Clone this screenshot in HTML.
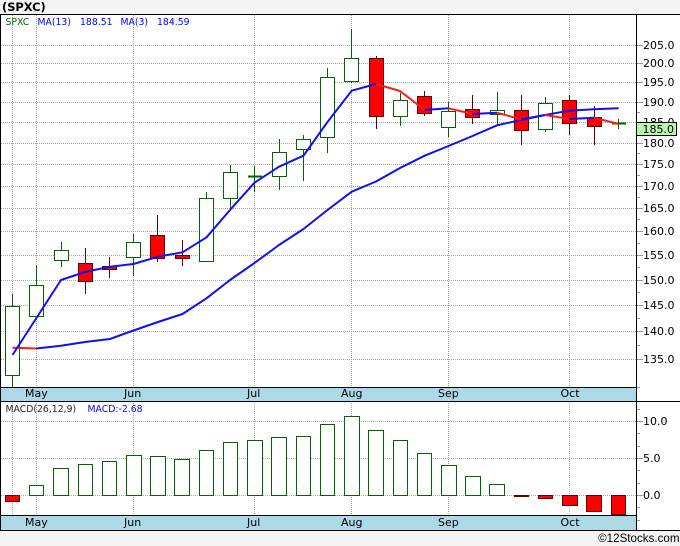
<!DOCTYPE html>
<html><head><meta charset="utf-8"><style>
html,body{margin:0;padding:0;background:#f4f4f4;width:680px;height:546px;overflow:hidden}
svg{display:block}
text{font-family:"DejaVu Sans",sans-serif;font-size:11px;fill:#000}
.s{font-size:9.3px}
</style></head><body>
<svg width="680" height="546" viewBox="0 0 680 546" xmlns="http://www.w3.org/2000/svg">
<rect width="680" height="546" fill="#f4f4f4"/>
<rect x="0" y="14" width="680" height="516" fill="#fff"/>
<text x="2" y="11" style="font-weight:bold;font-size:11.4px">(SPXC)</text>
<g fill="none" stroke="#aaa" stroke-dasharray="1 1" shape-rendering="crispEdges">
<path d="M1 45.5H637M1 63.5H637M1 82.5H637M1 102.5H637M1 122.5H637M1 143.5H637M1 164.5H637M1 186.5H637M1 208.5H637M1 231.5H637M1 255.5H637M1 280.5H637M1 305.5H637M1 331.5H637M1 359.5H637"/>
<path d="M1 421.5H637M1 458.5H637M1 495.5H637"/>
<path d="M12.5 15V387M36.5 15V387M133.5 15V387M254.5 15V387M351.5 15V387M448.5 15V387M569.5 15V387"/>
<path d="M12.5 401V515M36.5 401V515M133.5 401V515M254.5 401V515M351.5 401V515M448.5 401V515M569.5 401V515"/>
</g>
<rect x="0" y="387" width="637" height="14" fill="#add8e6"/>
<rect x="0" y="515" width="637" height="15" fill="#add8e6"/>
<g fill="none" stroke="#999" shape-rendering="crispEdges">
<path d="M637 45.5H643M637 63.5H643M637 82.5H643M637 102.5H643M637 122.5H643M637 143.5H643M637 164.5H643M637 186.5H643M637 208.5H643M637 231.5H643M637 255.5H643M637 280.5H643M637 305.5H643M637 331.5H643M637 359.5H643"/>
<path d="M637 112.5H640M637 153.5H640M637 175.5H640M637 197.5H640M637 219.5H640M637 243.5H640M637 267.5H640M637 292.5H640M637 318.5H640M637 345.5H640M637 387.5H640"/>
<path d="M637 421.5H643M637 458.5H643M637 495.5H643"/>
<path d="M637 409.5H640M637 433.5H640M637 446.5H640M637 470.5H640M637 483.5H640M637 507.5H640M637 520.5H640"/>
</g>
<g fill="none" stroke="#000" shape-rendering="crispEdges">
<path d="M0 14.5H680M0 401.5H680"/>
<path d="M0 387.5H637M0 515.5H637M0 530.5H680"/>
<path d="M636.5 14V530"/>
<path d="M.5 14V530"/>
</g>

<g fill="none" stroke="#006400" shape-rendering="crispEdges">
<path d="M12.5 294V306M12.5 375V387M36.5 265V285M61.5 242V250M61.5 260V267M133.5 234V242M133.5 257V276M206.5 192V198M230.5 165V172M230.5 198V208M254.5 166V192M279.5 139V152M279.5 176V190M303.5 135V139M303.5 149V181M327.5 68V77M327.5 137V153M351.5 29V58M351.5 81V83M400.5 93V100M400.5 116V126M448.5 102V111M448.5 127V137M497.5 92V110M497.5 114V125M545.5 97V103M545.5 129V132M618.5 119V129"/>
</g>
<g fill="none" stroke="#660000" shape-rendering="crispEdges">
<path d="M85.5 248V263M85.5 282V294M109.5 257V266M109.5 269V278M157.5 215V235M157.5 259V262M182.5 240V255M182.5 258V266M376.5 56V58M376.5 116V129M424.5 91V96M424.5 113V116M472.5 95V109M472.5 117V124M521.5 95V110M521.5 130V145M569.5 95V100M569.5 123V135M594.5 106V117M594.5 126V145"/>
</g>
<g fill="#fff" stroke="#006400" shape-rendering="crispEdges">
<rect x="5.5" y="306.5" width="14" height="69"/>
<rect x="29.5" y="285.5" width="14" height="31"/>
<rect x="54.5" y="250.5" width="14" height="10"/>
<rect x="126.5" y="242.5" width="14" height="15"/>
<rect x="199.5" y="198.5" width="14" height="63"/>
<rect x="223.5" y="172.5" width="14" height="26"/>
<rect x="272.5" y="152.5" width="14" height="24"/>
<rect x="296.5" y="139.5" width="14" height="10"/>
<rect x="320.5" y="77.5" width="14" height="60"/>
<rect x="344.5" y="58.5" width="14" height="23"/>
<rect x="393.5" y="100.5" width="14" height="16"/>
<rect x="441.5" y="111.5" width="14" height="16"/>
<rect x="490.5" y="110.5" width="14" height="4"/>
<rect x="538.5" y="103.5" width="14" height="26"/>
</g>
<path d="M248 176.5H262M612 123.5H626" stroke="#006400" stroke-width="2" fill="none" shape-rendering="crispEdges"/>
<g fill="#f00" stroke="#660000" shape-rendering="crispEdges">
<rect x="78.5" y="263.5" width="14" height="18"/>
<rect x="102.5" y="266.5" width="14" height="3"/>
<rect x="150.5" y="235.5" width="14" height="23"/>
<rect x="175.5" y="255.5" width="14" height="3"/>
<rect x="369.5" y="58.5" width="14" height="58"/>
<rect x="417.5" y="96.5" width="14" height="17"/>
<rect x="465.5" y="109.5" width="14" height="8"/>
<rect x="514.5" y="110.5" width="14" height="20"/>
<rect x="562.5" y="100.5" width="14" height="23"/>
<rect x="587.5" y="117.5" width="14" height="9"/>
</g>

<g fill="none" stroke-width="2" stroke-linejoin="round">
<path stroke="#ff1a1a" d="M12.5 347.7L36.5 348.5"/>
<path stroke="#1010f0" d="M36.5 348.5L61 345.7L85 342L110 339L133.5 330.5L158 322L182.5 314L206.5 298.3L230 280L254.5 263L279 245L303.5 229L327.5 210L351.7 191.7L376 181.5L400 168L424.7 155.7L448.5 146L472.5 136L497 125.3L521 120L545 115L569 110.7L594 109.3L618.7 108.3"/>
<path stroke="#ff1a1a" d="M376 84L400 91L424.7 110M448.5 108.3L472.5 114M497 112.7L521 119.3M545 115L569.5 119M594 117.7L618.7 124"/>
<path stroke="#1010f0" d="M12.5 355L61 280L85 272L110 266.7L133.5 264L158 256.7L182.5 252.3L206.5 237.3L230 210L254.5 182.7L279 166.7L303.5 155.7L327.5 122L351.7 90.7L376 84M424.7 110L448.5 108.3M472.5 114L497 112.7M521 119.3L545 115M569.5 119L594 117.7"/>
</g>

<g fill="#fff" stroke="#006400" shape-rendering="crispEdges">
<rect x="29.5" y="485.5" width="14" height="10"/>
<rect x="53.5" y="468.5" width="15" height="27"/>
<rect x="78.5" y="464.5" width="14" height="31"/>
<rect x="102.5" y="461.5" width="14" height="34"/>
<rect x="126.5" y="455.5" width="15" height="40"/>
<rect x="150.5" y="456.5" width="15" height="39"/>
<rect x="174.5" y="459.5" width="15" height="36"/>
<rect x="199.5" y="450.5" width="14" height="45"/>
<rect x="223.5" y="442.5" width="14" height="53"/>
<rect x="247.5" y="440.5" width="15" height="55"/>
<rect x="271.5" y="437.5" width="15" height="58"/>
<rect x="296.5" y="436.5" width="14" height="59"/>
<rect x="320.5" y="424.5" width="14" height="71"/>
<rect x="344.5" y="416.5" width="15" height="79"/>
<rect x="368.5" y="430.5" width="15" height="65"/>
<rect x="393.5" y="440.5" width="14" height="55"/>
<rect x="417.5" y="453.5" width="14" height="42"/>
<rect x="441.5" y="465.5" width="15" height="30"/>
<rect x="465.5" y="476.5" width="15" height="19"/>
<rect x="489.5" y="484.5" width="15" height="11"/>
</g>
<g fill="#f00" stroke="#660000" shape-rendering="crispEdges">
<rect x="5.5" y="495.5" width="14" height="6"/>
<rect x="514.5" y="495.5" width="14" height="1"/>
<rect x="538.5" y="495.5" width="14" height="3"/>
<rect x="562.5" y="495.5" width="15" height="10"/>
<rect x="586.5" y="495.5" width="15" height="16"/>
<rect x="611.5" y="495.5" width="14" height="19"/>
</g>
<path d="M0 515.5H637" stroke="#000" fill="none" shape-rendering="crispEdges"/>

<text class="s" x="5.5" y="25" style="fill:#006400">SPXC</text>
<text class="s" x="37.5" y="25" style="fill:#0000ff">MA(13)</text>
<text class="s" x="80" y="25" style="fill:#0000ff">188.51</text>
<text class="s" x="120.5" y="25" style="fill:#0000ff">MA(3)</text>
<text class="s" x="157" y="25" style="fill:#0000ff">184.59</text>
<text class="s" x="5.5" y="412" style="fill:#222">MACD(26,12,9)</text>
<text class="s" x="87.5" y="412" style="fill:#0000ff">MACD:-2.68</text>

<text x="25" y="397">May</text><text x="124" y="397">Jun</text><text x="247" y="397">Jul</text><text x="341" y="397">Aug</text><text x="438" y="397">Sep</text><text x="560.5" y="397">Oct</text>
<text x="25" y="526">May</text><text x="124" y="526">Jun</text><text x="247" y="526">Jul</text><text x="341" y="526">Aug</text><text x="438" y="526">Sep</text><text x="560.5" y="526">Oct</text>

<text x="643" y="49">205.0</text><text x="643" y="67">200.0</text><text x="643" y="86">195.0</text><text x="643" y="106">190.0</text><text x="643" y="126">185.0</text><text x="643" y="147">180.0</text><text x="643" y="168">175.0</text><text x="643" y="190">170.0</text><text x="643" y="212">165.0</text><text x="643" y="235">160.0</text><text x="643" y="259">155.0</text><text x="643" y="284">150.0</text><text x="643" y="309">145.0</text><text x="643" y="335">140.0</text><text x="643" y="363">135.0</text>
<text x="643" y="425">10.0</text><text x="643" y="462">5.0</text><text x="643" y="499">0.0</text>

<rect x="636.5" y="122.5" width="40" height="13" fill="#b9f7b0" stroke="#000" shape-rendering="crispEdges"/>
<text x="642.5" y="133">185.0</text>
<text x="679.5" y="542" text-anchor="end" style="font-family:'Liberation Sans',sans-serif;font-size:11.6px">©12Stocks.com</text>
</svg>
</body></html>
